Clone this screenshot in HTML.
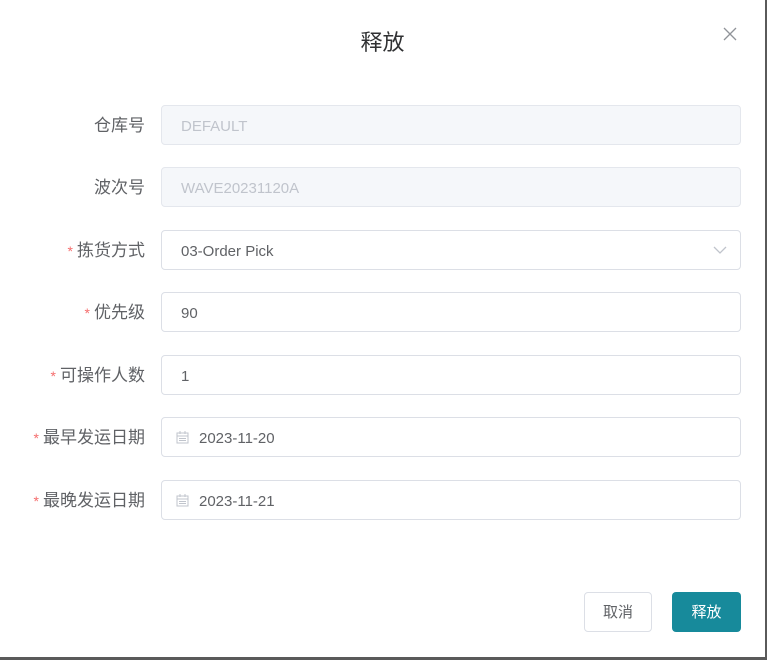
<html><head><style>
body{margin:0;width:767px;height:660px;background:#5a5a5a;position:relative;overflow:hidden;font-family:"Liberation Sans","Noto Sans CJK SC",sans-serif}
.d{position:absolute;left:0;top:0;width:765px;height:657px;background:#fff}
.t{position:absolute;left:0;width:765px;top:25px;text-align:center;font-size:22px;color:#303133}
.x{position:absolute;left:723px;top:27px}
.l{position:absolute;right:620px;font-size:17px;color:#606266;line-height:42px;white-space:nowrap}
.l b{color:#f56c6c;font-weight:normal;margin-right:4px;font-size:14px}
.i{position:absolute;left:161px;height:38px;border:1px solid #dcdfe6;border-radius:4px;font-size:15px;color:#606266;line-height:42px;padding-left:19px;box-sizing:content-box;width:559px}
.dis{background:#f5f7fa;border-color:#e4e7ed;color:#c0c4cc}
.cal{position:absolute;left:14px;top:13px}
.btn{position:absolute;top:592px;height:38px;border-radius:4px;font-size:15px;line-height:40px;text-align:center}
</style></head><body><div class="d">
<div class="t">释放</div>
<svg class="x" width="14" height="14" viewBox="0 0 14 14"><path d="M1 1L13 13M13 1L1 13" stroke="#909399" stroke-width="1.3"/></svg>
<div class="l" style="top:105px">仓库号</div><div class="i dis" style="top:105px">DEFAULT</div>
<div class="l" style="top:167px">波次号</div><div class="i dis" style="top:167px">WAVE20231120A</div>
<div class="l" style="top:230px"><b>*</b>拣货方式</div><div class="i" style="top:230px">03-Order Pick<svg style="position:absolute;right:13px;top:15px" width="14" height="8" viewBox="0 0 14 8"><path d="M1 1L7 7L13 1" fill="none" stroke="#c0c4cc" stroke-width="1.3"/></svg></div>
<div class="l" style="top:292px"><b>*</b>优先级</div><div class="i" style="top:292px">90</div>
<div class="l" style="top:355px"><b>*</b>可操作人数</div><div class="i" style="top:355px">1</div>
<div class="l" style="top:417px"><b>*</b>最早发运日期</div><div class="i" style="top:417px;padding-left:37px;width:541px"><svg class="cal" width="13" height="13" viewBox="0 0 13 13"><rect x="1" y="2" width="11" height="10" fill="none" stroke="#c0c4cc"/><path d="M1 5H12M4 0V3M9 0V3M3 7.5H10M3 9.5H10" stroke="#c0c4cc"/></svg>2023-11-20</div>
<div class="l" style="top:480px"><b>*</b>最晚发运日期</div><div class="i" style="top:480px;padding-left:37px;width:541px"><svg class="cal" width="13" height="13" viewBox="0 0 13 13"><rect x="1" y="2" width="11" height="10" fill="none" stroke="#c0c4cc"/><path d="M1 5H12M4 0V3M9 0V3M3 7.5H10M3 9.5H10" stroke="#c0c4cc"/></svg>2023-11-21</div>
<div class="btn" style="left:584px;width:66px;border:1px solid #dcdfe6;color:#606266">取消</div>
<div class="btn" style="left:672px;width:69px;height:40px;line-height:42px;background:#178a9b;color:#fff">释放</div>
</div></body></html>
